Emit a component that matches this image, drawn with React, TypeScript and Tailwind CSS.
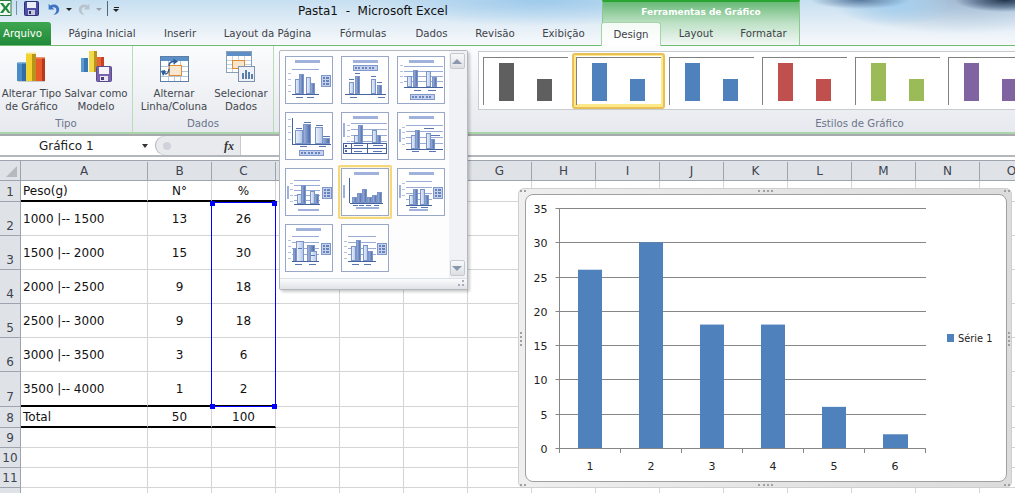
import React from "react";

const F = "[font-family:'DejaVu_Sans',sans-serif]";

const blue = "#4f81bd";

function Bar({ x, y, w, h, dark }: { x: number; y: number; w: number; h: number; dark?: boolean }) {
  return <rect x={x + 0.5} y={y + 0.5} width={w - 1} height={h - 1} fill={dark ? "url(#bd)" : "url(#bl)"} stroke="#7b95c9" strokeWidth="1" />;
}
function L({ x1, x2, y, c = "#9aacd6", w = 1 }: { x1: number; x2: number; y: number; c?: string; w?: number }) {
  return <line x1={x1} x2={x2} y1={y} y2={y} stroke={c} strokeWidth={w} />;
}
function Title({ x = 12, y = 4, w = 25 }: { x?: number; y?: number; w?: number }) {
  return <rect x={x} y={y} width={w} height="3" fill="#a0b1dc" />;
}
function HLegend({ x, y }: { x: number; y: number }) {
  return (
    <g>
      <rect x={x + 0.5} y={y + 0.5} width="24" height="5" fill="#c4d1ee" stroke="#7f97cb" />
      {[2, 5, 9, 12, 16, 19].map((d, i) => (
        <rect key={i} x={x + d} y={y + 2} width="2" height="2" fill="#6a83bb" />
      ))}
    </g>
  );
}
function VLegend({ x, y, h = 12 }: { x: number; y: number; h?: number }) {
  return (
    <g>
      <rect x={x + 0.5} y={y + 0.5} width="9" height={h - 1} fill="#c4d1ee" stroke="#7f97cb" />
      {[2, 5, 8].map((d) => (
        <g key={d}>
          <rect x={x + 2} y={y + d} width="2" height="2" fill="#6a83bb" />
          <rect x={x + 5} y={y + d} width="3" height="2" fill="#6a83bb" />
        </g>
      ))}
    </g>
  );
}
function Ticks({ x, ys }: { x: number; ys: number[] }) {
  return (
    <g>
      {ys.map((y) => (
        <L key={y} x1={x} x2={x + 3} y={y + 0.5} c="#b5c1de" />
      ))}
    </g>
  );
}
function Grid({ x1, x2, ys }: { x1: number; x2: number; ys: number[] }) {
  return (
    <g>
      {ys.map((y) => (
        <L key={y} x1={x1} x2={x2} y={y + 0.5} />
      ))}
    </g>
  );
}
function Base({ x1, x2, y }: { x1: number; x2: number; y: number }) {
  return <L x1={x1} x2={x2} y={y + 0.5} c="#45639f" />;
}
function Marks({ items }: { items: [number, number, number][] }) {
  return (
    <g>
      {items.map(([a, b, y], i) => (
        <L key={i} x1={a} x2={b} y={y + 0.5} c="#5a76b0" />
      ))}
    </g>
  );
}

const thumbs: React.ReactNode[] = [
  <g key="0">
    <Title x={10} /><Grid x1={7} x2={34} ys={[13]} /><Ticks x={3} ys={[17, 23, 29, 35]} />
    <Bar x={10} y={23} w={5} h={15} /><Bar x={14} y={18} w={5} h={20} dark /><Bar x={21} y={21} w={5} h={17} /><Bar x={25} y={27} w={5} h={11} dark />
    <Base x1={7} x2={34} y={38} /><Marks items={[[11, 18, 41], [22, 29, 41]]} /><VLegend x={36} y={19} />
  </g>,
  <g key="1">
    <Title /><HLegend x={12} y={9} />
    <Bar x={8} y={26} w={5} h={12} /><Bar x={14} y={20} w={5} h={18} dark /><Bar x={30} y={23} w={5} h={15} /><Bar x={36} y={29} w={5} h={9} dark />
    <Marks items={[[8, 13, 23], [14, 19, 17], [30, 35, 20], [36, 41, 26], [9, 16, 41], [37, 44, 41]]} /><Base x1={4} x2={45} y={38} />
  </g>,
  <g key="2">
    <Title /><Grid x1={7} x2={46} ys={[10, 15, 20, 25]} /><Ticks x={3} ys={[9, 15, 20, 26]} />
    <Bar x={10} y={20} w={5} h={11} /><Bar x={16} y={14} w={5} h={17} dark /><Bar x={29} y={15} w={5} h={16} /><Bar x={35} y={21} w={5} h={10} dark />
    <Base x1={7} x2={46} y={31} /><Marks items={[[17, 24, 34], [31, 39, 34]]} /><HLegend x={13} y={38} />
  </g>,
  <g key="3">
    <Ticks x={3} ys={[7, 14, 20, 27]} /><line x1="7.5" x2="7.5" y1="6" y2="32" stroke="#45639f" />
    <Bar x={10} y={18} w={8} h={14} /><Bar x={18} y={12} w={8} h={20} dark /><Bar x={30} y={15} w={8} h={17} /><Bar x={37} y={26} w={8} h={6} dark />
    <Marks items={[[11, 17, 16], [19, 26, 10], [31, 38, 13], [38, 45, 24]]} /><Base x1={7} x2={46} y={32} /><Marks items={[[15, 22, 34], [34, 41, 34]]} /><HLegend x={14} y={38} />
  </g>,
  <g key="4">
    <Title /><rect x="2" y="11" width="2" height="14" fill="#a0b1dc" /><Grid x1={10} x2={46} ys={[11, 17, 23, 29]} /><Ticks x={6} ys={[13, 18, 24, 29]} />
    <Bar x={13} y={23} w={5} h={8} /><Bar x={17} y={13} w={5} h={18} dark /><Bar x={31} y={18} w={5} h={13} /><Bar x={35} y={23} w={5} h={8} dark />
    <rect x="2.5" y="31.5" width="43" height="10" fill="#fff" stroke="#45639f" /><line x1="10.5" x2="10.5" y1="31" y2="42" stroke="#45639f" /><line x1="26.5" x2="26.5" y1="31" y2="42" stroke="#45639f" /><L x1={2} x2={46} y={36.5} c="#45639f" />
    <Marks items={[[13, 22, 33], [32, 42, 33], [13, 21, 39], [32, 41, 39]]} /><rect x="4" y="33" width="2" height="2" fill="#45639f" /><rect x="4" y="38" width="2" height="2" fill="#45639f" />
  </g>,
  <g key="5">
    <Title /><rect x="2" y="17" width="2" height="13" fill="#a0b1dc" /><Grid x1={9} x2={46} ys={[13, 19, 25, 31]} /><Ticks x={5} ys={[15, 20, 26, 32]} />
    <Bar x={14} y={23} w={5} h={14} /><Bar x={18} y={18} w={5} h={19} dark /><Bar x={29} y={21} w={5} h={16} /><Bar x={33} y={27} w={5} h={10} dark />
    <Marks items={[[27, 37, 16], [34, 43, 23], [15, 22, 39], [32, 39, 39]]} /><Base x1={9} x2={46} y={37} />
  </g>,
  <g key="6">
    <rect x="2" y="18" width="2" height="13" fill="#a0b1dc" /><Grid x1={9} x2={35} ys={[12, 17, 22, 27, 32]} /><Ticks x={5} ys={[15, 21, 27, 33]} />
    <Bar x={12} y={26} w={5} h={10} /><Bar x={16} y={17} w={5} h={19} dark /><Bar x={25} y={23} w={5} h={13} /><Bar x={29} y={26} w={5} h={10} dark />
    <Base x1={9} x2={35} y={36} /><rect x="13" y="41" width="21" height="2" fill="#a0b1dc" /><VLegend x={37} y={19} />
  </g>,
  <g key="7">
    <Title x={13} /><rect x="2" y="17" width="2" height="13" fill="#a0b1dc" /><line x1="8.5" x2="8.5" y1="10" y2="35" stroke="#45639f" />
    <Bar x={11} y={29} w={5} h={6} dark /><Bar x={16} y={25} w={5} h={10} dark /><Bar x={21} y={21} w={5} h={14} dark /><Bar x={26} y={29} w={5} h={6} dark /><Bar x={31} y={27} w={5} h={8} dark /><Bar x={36} y={24} w={5} h={11} dark />
    <Base x1={9} x2={42} y={35} /><Marks items={[[12, 17, 37], [18, 23, 37], [25, 30, 37], [33, 38, 37]]} /><rect x="15" y="39" width="23" height="2" fill="#a0b1dc" />
  </g>,
  <g key="8">
    <Title x={12} /><rect x="2" y="17" width="2" height="13" fill="#a0b1dc" /><Grid x1={9} x2={35} ys={[13, 19, 25, 31]} /><Ticks x={5} ys={[15, 21, 27]} />
    <Bar x={12} y={27} w={5} h={10} /><Bar x={16} y={21} w={5} h={16} dark /><Bar x={23} y={21} w={5} h={16} /><Bar x={27} y={27} w={5} h={10} dark />
    <Base x1={9} x2={35} y={37} /><Marks items={[[13, 20, 39], [24, 31, 39]]} /><rect x="12" y="41" width="19" height="2" fill="#a0b1dc" /><VLegend x={36} y={19} />
  </g>,
  <g key="9">
    <Title x={11} /><Grid x1={7} x2={34} ys={[12, 18, 24, 30]} /><Ticks x={3} ys={[16, 22, 28, 34]} />
    <Bar x={8} y={24} w={4} h={14} dark /><Bar x={11} y={17} w={8} h={21} /><Bar x={22} y={21} w={8} h={17} dark /><Bar x={25} y={27} w={7} h={11} />
    <Marks items={[[13, 17, 24], [26, 30, 31], [10, 17, 40], [24, 31, 40]]} /><Base x1={7} x2={34} y={37} /><VLegend x={36} y={19} />
  </g>,
  <g key="10">
    <Grid x1={7} x2={35} ys={[12, 18, 24, 30]} /><Ticks x={3} ys={[17, 22, 28, 34]} />
    <Bar x={10} y={22} w={5} h={15} /><Bar x={15} y={16} w={5} h={21} dark /><Bar x={22} y={21} w={5} h={16} /><Bar x={27} y={27} w={5} h={10} dark />
    <Base x1={7} x2={35} y={37} /><Marks items={[[11, 18, 40], [23, 30, 40]]} /><VLegend x={36} y={19} />
  </g>,
];

function Thumb({ i }: { i: number }) {
  const box = (
    <div className="h-12 w-12 border border-[#9aa8c8] bg-white">
      <svg width="46" height="46" viewBox="1 1 46 46" className="block">
        {thumbs[i]}
      </svg>
    </div>
  );
  if (i === 7)
    return <div className="-m-[3px] rounded-[2px] border-2 border-[#f6d878] bg-[#fff6d8] p-px">{box}</div>;
  return box;
}

function Popup() {
  return (
    <div className="absolute left-[279px] top-[50px] z-20 flex h-[240px] w-[189px] flex-col rounded-[2px] border border-[#b4b7bb] bg-[#fdfdfe] shadow-[2px_2px_3px_rgba(0,0,0,0.2)]">
      <div className="flex min-h-0 flex-1">
        <div className="grid flex-1 grid-cols-[48px_48px_48px] content-start gap-2 pl-[5px] pt-[5px]">
          {thumbs.map((_, i) => (
            <div key={i} className="h-12 w-12">
              <Thumb i={i} />
            </div>
          ))}
        </div>
        <div className="flex w-[18px] flex-col items-center justify-between bg-[#f1f2f5] py-0.5 pr-0.5">
          <div className="flex h-4 w-[15px] items-center justify-center rounded-[2px] border border-[#c5c8cd] bg-gradient-to-b from-[#f8f9fa] to-[#dcdfe4]">
            <div className="h-0 w-0 border-x-[5px] border-b-[5px] border-x-transparent border-b-[#8a98ad]" />
          </div>
          <div className="flex h-4 w-[15px] items-center justify-center rounded-[2px] border border-[#c5c8cd] bg-gradient-to-b from-[#f8f9fa] to-[#dcdfe4]">
            <div className="h-0 w-0 border-x-[5px] border-t-[5px] border-x-transparent border-t-[#8a98ad]" />
          </div>
        </div>
      </div>
      <div className="relative h-[11px] border-t border-[#dde0e4] bg-gradient-to-b from-[#fafbfc] to-[#dfe2e7]">
        <svg width="7" height="7" className="absolute bottom-0.5 right-0.5">
          <rect x="4" y="0" width="2" height="2" fill="#a9afb9" /><rect x="0" y="4" width="2" height="2" fill="#a9afb9" /><rect x="4" y="4" width="2" height="2" fill="#a9afb9" />
        </svg>
      </div>
    </div>
  );
}

function ExcelLogo() {
  return (
    <svg width="12" height="16" viewBox="0 0 12 16" className="-mt-[1px]">
      <rect x="-1" y="0.500" width="12" height="15" fill="#f4faf5" stroke="#2b7a3a" />
      <path d="M0 3h3l2.500 3.500L8 3h2.500L7 8l3.500 5H8L5.500 9.500 3 13H0l3.800-5z" fill="#1f8a3b" />
    </svg>
  );
}

function QuickAccess() {
  return (
    <div className="flex h-[22px] items-start pt-px">
      <ExcelLogo />
      <div className="ml-[4px] mr-[7px] h-[14px] w-px bg-[#7c8ea3]" />
      <svg width="15" height="15" viewBox="0 0 15 15">
        <rect x="0.500" y="0.500" width="14" height="14" rx="1" fill="#4d4fa6" stroke="#2e2f78" />
        <rect x="3" y="1" width="9" height="6" fill="#e8eef8" />
        <rect x="4" y="9" width="7" height="5" fill="#c5c9d6" />
        <rect x="5" y="10" width="2" height="3" fill="#2e2f78" />
      </svg>
      <svg width="13" height="13" viewBox="0 0 16 16" className="ml-[8px] mt-[2px]">
        <path d="M2 1v7h7L6.500 5.500C9 4.500 11.500 5.500 11.500 8.500c0 2.500-1 4-3.500 6 4.500 0 7-3 7-6.500 0-5.500-6.500-8-11-5z" fill="#3f74c4" />
      </svg>
      <div className="ml-[6px] mt-[7px] h-0 w-0 border-x-[3px] border-t-[3px] border-x-transparent border-t-[#222]" />
      <svg width="13" height="13" viewBox="0 0 16 16" className="ml-[6px] mt-[2px]">
        <path d="M14 1v7H7l2.500-2.500C7 4.500 4.500 5.500 4.500 8.500c0 2.500 1 4 3.500 6-4.500 0-7-3-7-6.500 0-5.500 6.500-8 11-5z" fill="#b9c3cd" />
      </svg>
      <div className="ml-[5px] mt-[7px] h-0 w-0 border-x-[3px] border-t-[3px] border-x-transparent border-t-[#9aa3ad]" />
      <div className="ml-[5px] mr-[5px] h-[15px] w-px bg-[#55667a]" />
      <div className="mt-[6px] flex flex-col items-center">
        <div className="h-px w-[5px] bg-[#222]" />
        <div className="mt-px h-0 w-0 border-x-[3px] border-t-[3px] border-x-transparent border-t-[#222]" />
      </div>
    </div>
  );
}

function ChartTypeIcon() {
  return (
    <svg width="29" height="30" viewBox="0 0 29 30">
      <path d="M0 11l2-1h7v19H0z" fill="#2f6da8" /><rect x="0" y="11" width="5" height="18" fill="#4c8cc6" /><rect x="1" y="10" width="8" height="1.500" fill="#8ab8de" />
      <path d="M18 6l2-1h8v24H18z" fill="#b8391a" /><rect x="18" y="6" width="7" height="23" fill="#e85a2b" /><rect x="19" y="5" width="9" height="1.500" fill="#f0936f" />
      <path d="M9 2l2-1h8v28H9z" fill="#b9941a" /><rect x="9" y="2" width="6" height="27" fill="#f2d230" /><rect x="10" y="0.500" width="9" height="1.500" fill="#f6e88a" />
      <rect x="1" y="29" width="27" height="1" fill="#8a8f96" opacity="0.4" />
    </svg>
  );
}
function TemplateIcon() {
  return (
    <svg width="31" height="31" viewBox="0 0 31 31">
      <rect x="0" y="7" width="7" height="14" fill="#3a78b5" /><rect x="0" y="7" width="3" height="14" fill="#5e9ad2" />
      <rect x="16" y="6" width="7" height="12" fill="#c9431f" /><rect x="16" y="6" width="4" height="12" fill="#e8643a" />
      <rect x="8" y="0" width="8" height="21" fill="#b9941a" /><rect x="8" y="0" width="5" height="21" fill="#f1d94c" />
      <rect x="15.500" y="15.500" width="15" height="15" rx="1" fill="#7a63ad" stroke="#5a4a90" />
      <rect x="18" y="16" width="10" height="7" fill="#f4f2fa" /><rect x="19" y="25" width="8" height="5" fill="#e8e4f2" /><rect x="20" y="26" width="3" height="3" fill="#4a3a86" />
    </svg>
  );
}
function SwitchIcon() {
  return (
    <svg width="29" height="26" viewBox="0 0 29 26">
      <rect x="0.500" y="0.500" width="28" height="25" fill="#fff" stroke="#5b7fa8" />
      <rect x="1" y="1" width="27" height="4" fill="#5b8fc6" />
      {[8, 14, 20].map((x) => <line key={x} x1={x + 0.5} x2={x + 0.5} y1="5" y2="25" stroke="#b8c6d6" />)}
      {[10, 15, 20].map((y) => <line key={y} x1="1" x2="28" y1={y + 0.5} y2={y + 0.5} stroke="#b8c6d6" />)}
      <rect x="9.500" y="9.500" width="12" height="10" fill="#f8e8d2" stroke="#e08a36" />
      <path d="M9 10c0-3 2-4.500 5-4.500" fill="none" stroke="#2b5c94" strokeWidth="1.500" />
      <path d="M13.500 2.500l4.500 3-4.500 3z" fill="#2b5c94" />
      <path d="M9 13c0 3-2 5-4 5" fill="none" stroke="#2b5c94" strokeWidth="1.500" />
      <path d="M4.500 14l-3.500 1 2 5 3-4z" fill="#2b5c94" />
    </svg>
  );
}
function SelectDataIcon() {
  return (
    <svg width="30" height="31" viewBox="0 0 30 31">
      <rect x="0.500" y="0.500" width="25" height="21" fill="#fff" stroke="#8aa0b8" />
      <rect x="1" y="1" width="24" height="4" fill="#5b8fc6" />
      {[6, 12, 18].map((x) => <line key={x} x1={x + 0.5} x2={x + 0.5} y1="5" y2="21" stroke="#c9d3de" />)}
      {[9, 13, 17].map((y) => <line key={y} x1="1" x2="25" y1={y + 0.5} y2={y + 0.5} stroke="#c9d3de" />)}
      <rect x="6.500" y="9.500" width="12" height="8" fill="#f8e6cc" stroke="#e08a36" />
      <rect x="12.500" y="15.500" width="16" height="15" fill="#eef2f8" stroke="#7d93ad" />
      <rect x="16" y="22" width="2" height="6" fill="#5b7fa8" /><rect x="19" y="19" width="2" height="9" fill="#5b7fa8" /><rect x="22" y="21" width="2" height="7" fill="#5b7fa8" /><rect x="25" y="23" width="2" height="5" fill="#5b7fa8" />
    </svg>
  );
}

function RibbonButton({ w, icon, a, b }: { w: string; icon: React.ReactNode; a: string; b: string }) {
  return (
    <div className={`flex flex-col items-center ${w}`}>
      <div className="flex h-[36px] items-end justify-center">{icon}</div>
      <div className="mt-[5px] whitespace-nowrap text-center text-[10.2px] leading-[13px] text-[#43474f]">
        <div>{a}</div>
        <div>{b}</div>
      </div>
    </div>
  );
}

function Style({ c, selected }: { c: string; selected?: boolean }) {
  return (
    <div className={`h-[56px] w-[93px] shrink-0 border-2 p-[2px] ${selected ? "rounded-[3px] border-[#e9bf58] bg-white shadow-[inset_0_0_0_1px_#ffe88a,inset_0_-1px_0_2px_#ffe88a]" : "border-transparent"}`}>
      <div className="flex h-[48px] w-[85px] items-end gap-[23px] border-l border-t border-[#808080] pb-[4px] pl-[15px]">
        <div className="h-[38px] w-[15px] shrink-0" style={{ background: c }} />
        <div className="h-[22px] w-[15px] shrink-0" style={{ background: c }} />
      </div>
    </div>
  );
}

const cols = ["D", "E", "F", "G", "H", "I", "J", "K", "L", "M", "N", "O"];
const rows: [string, string, string, string, number][] = [
  ["1", "Peso(g)", "N°", "%", 21],
  ["2", "1000 |-- 1500", "13", "26", 34],
  ["3", "1500 |-- 2000", "15", "30", 34],
  ["4", "2000 |-- 2500", "9", "18", 34],
  ["5", "2500 |-- 3000", "9", "18", 34],
  ["6", "3000 |-- 3500", "3", "6", 34],
  ["7", "3500 |-- 4000", "1", "2", 35],
  ["8", "Total", "50", "100", 21],
  ["9", "", "", "", 20],
  ["10", "", "", "", 20],
  ["11", "", "", "", 20],
  ["", "", "", "", 6],
];

function Sheet() {
  return (
    <div className="relative flex-1 overflow-hidden bg-white">
      <div className="flex h-5 border-b border-[#9da4ae] bg-[#dfe3e8] pt-px text-[12px] text-[#3d4450]">
        <div className="relative -mt-px w-[21px] shrink-0 border-r border-[#9da4ae]">
          <div className="absolute bottom-[3px] right-[3px] h-0 w-0 border-b-[11px] border-l-[11px] border-b-[#b5bac1] border-l-transparent" />
        </div>
        <div className="flex w-[127px] shrink-0 items-center justify-center border-r border-[#9da4ae]">A</div>
        <div className="flex w-[64px] shrink-0 items-center justify-center border-r border-[#9da4ae]">B</div>
        <div className="flex w-[64px] shrink-0 items-center justify-center border-r border-[#9da4ae]">C</div>
        {cols.map((c) => (
          <div key={c} className="flex w-[64px] shrink-0 items-center justify-center border-r border-[#9da4ae]">{c}</div>
        ))}
      </div>
      {rows.map(([n, a, b, c, h], i) => (
        <div key={i} className="flex text-[12px] text-[#111]" style={{ height: h }}>
          <div className="flex w-[21px] shrink-0 items-end justify-center border-b border-r border-[#9da4ae] bg-[#dfe3e8] text-[#3d4450]">
            <span className="leading-[17px]">{n}</span>
          </div>
          <div className={`flex w-[127px] shrink-0 items-center border-r border-[#d4d4d4] pl-0.5 ${i === 0 || i === 6 || i === 7 ? "border-b-2 border-b-black pt-px" : "border-b border-b-[#d4d4d4]"}`}>{a}</div>
          <div className={`flex w-[64px] shrink-0 items-center justify-center border-r border-[#d4d4d4] ${i === 0 || i === 6 || i === 7 ? "border-b-2 border-b-black pt-px" : "border-b border-b-[#d4d4d4]"}`}>{b}</div>
          <div className={`flex w-[64px] shrink-0 items-center justify-center border-r border-[#d4d4d4] ${i === 0 || i === 6 || i === 7 ? "border-b-2 border-b-black pt-px" : "border-b border-b-[#d4d4d4]"}`}>{c}</div>
          {cols.map((k) => (
            <div key={k} className="w-[64px] shrink-0 border-b border-r border-[#d4d4d4]" />
          ))}
        </div>
      ))}
      <div className="absolute left-[211px] top-[41px] h-[205px] w-[65px] border border-[#0000ff]" />
      {[[210, 40], [272, 40], [210, 243], [272, 243]].map(([l, t]) => (
        <div key={`${l}-${t}`} className="absolute h-[5px] w-[5px] bg-[#0000ff]" style={{ left: l, top: t }} />
      ))}
      <Chart />
    </div>
  );
}

function Chart() {
  const x0 = 33.5;
  const base = 253.5;
  const values = [26, 30, 18, 18, 6, 2];
  return (
    <div className="absolute left-[518px] top-[27px] h-[300px] w-[494px] rounded-[6px] border border-[#cfcfcf] bg-gradient-to-r from-[#efefef] to-[#dcdcdc] py-[5px] pl-[6px] pr-[4px]">
      <div className="absolute left-[239px] top-[1px] w-[15px] border-t-2 border-dotted border-[#a0a0a0]" />
      <div className="absolute bottom-[1px] left-[239px] w-[15px] border-t-2 border-dotted border-[#a0a0a0]" />
      <div className="absolute left-[1px] top-[143px] h-[14px] border-l-2 border-dotted border-[#a0a0a0]" />
      <div className="absolute right-[1px] top-[143px] h-[14px] border-l-2 border-dotted border-[#a0a0a0]" />
      <div className="absolute left-[1px] top-[1px] w-[6px] border-t-2 border-dotted border-[#a0a0a0]" />
      <div className="absolute right-[1px] top-[1px] w-[6px] border-t-2 border-dotted border-[#a0a0a0]" />
      <div className="absolute bottom-[1px] left-[1px] w-[6px] border-t-2 border-dotted border-[#a0a0a0]" />
      <div className="absolute bottom-[1px] right-[1px] w-[6px] border-t-2 border-dotted border-[#a0a0a0]" />
      <div className="h-[288px] w-[482px] overflow-hidden rounded-[8px] border border-[#a0a0a0] bg-white">
        <svg width="480" height="286" viewBox="0 0 480 286" className="block" fontFamily="'DejaVu Sans', sans-serif" fontSize="11" fill="#222">
          {[0, 5, 10, 15, 20, 25, 30, 35].map((v, i) => {
            const y = Math.round(base - 0.5 - i * 34.286) + 0.5;
            return (
              <g key={v}>
                <line x1={x0 - 4} x2={400} y1={y} y2={y} stroke="#868686" />
                <text x={x0 - 12} y={y + 4} textAnchor="end">{v}</text>
              </g>
            );
          })}
          <line x1={x0} x2={x0} y1={13} y2={258} stroke="#868686" />
          {[0, 1, 2, 3, 4, 5, 6].map((i) => (
            <line key={i} x1={x0 + i * 61} x2={x0 + i * 61} y1={253} y2={258} stroke="#868686" />
          ))}
          {values.map((v, i) => (
            <g key={i}>
              <rect x={52 + i * 61} y={253 - v * 6.857} width={i === 5 ? 25 : 24} height={v * 6.857} fill={blue} />
              <text x={64 + i * 61} y={275} textAnchor="middle">{i + 1}</text>
            </g>
          ))}
          <rect x={421} y={139} width={7} height={8} fill={blue} />
          <text x={432} y={147} fontSize="9.800">Série 1</text>
        </svg>
      </div>
    </div>
  );
}

export default function App() {
  return (
    <div className={`relative flex h-[493px] w-[1015px] flex-col overflow-hidden bg-white ${F}`}>
      <div className="relative z-10 h-[46px] shrink-0 border-b border-[#6fbb72] bg-[radial-gradient(ellipse_50px_12px_at_1005px_0px,#22344c_0%,rgba(60,85,115,0.6)_60%,transparent_100%),radial-gradient(ellipse_50px_9px_at_860px_0px,#5a7a9e_0%,transparent_100%),radial-gradient(ellipse_60px_22px_at_895px_4px,#a4d0f0_0%,transparent_100%),radial-gradient(ellipse_130px_34px_at_960px_0px,#a3bad2_0%,transparent_100%),radial-gradient(ellipse_170px_26px_at_540px_0px,#9ecaeb_0%,transparent_100%),linear-gradient(to_bottom,#c6dff1_0%,#deebf5_45%,#f7f9fb_100%)]">
        <div className="flex h-[22px] items-center">
          <div className="w-[298px] shrink-0 overflow-hidden"><QuickAccess /></div>
          <div className="text-[12px] text-[#111]">Pasta1&nbsp; -&nbsp; Microsoft Excel</div>
        </div>
        <div className="absolute left-[602px] top-0 h-[45px] w-[198px] border-x border-t-2 border-[#8bc98f] border-t-[#28a62f] bg-gradient-to-b from-[#67b978] via-[#bfe2c7] to-[#f2f7f5]">
          <div className="pt-[4px] text-center text-[9px] font-bold text-white">Ferramentas de Gráfico</div>
        </div>
        <div className="absolute left-0 top-[22px] flex h-[24px] items-stretch text-[10.2px] text-[#3f434a]">
          <div className="flex w-[51px] items-center rounded-tr-[3px] border-b border-[#6fbb72] bg-gradient-to-b from-[#3fa650] to-[#1e8a3a] pl-[3px] text-white">Arquivo</div>
          <div className="flex">
            {[
              ["Página Inicial", "w-[96px]"],
              ["Inserir", "w-[60px]"],
              ["Layout da Página", "w-[115px]"],
              ["Fórmulas", "w-[76px]"],
              ["Dados", "w-[61px]"],
              ["Revisão", "w-[66px]"],
              ["Exibição", "w-[71px]"],
            ].map(([t, w], i) => (
              <div key={t} className={`flex items-center justify-center ${w} ${i === 0 ? "ml-[3px]" : ""}`}>{t}</div>
            ))}
          </div>
          <div className="ml-[2px] flex w-[60px] items-center justify-center rounded-t-[3px] border-x border-t border-[#a5d4a8] bg-gradient-to-b from-[#f4faf5] to-white">Design</div>
          <div className="flex w-[70px] items-center justify-center">Layout</div>
          <div className="flex w-[65px] items-center justify-center">Formatar</div>
        </div>
      </div>

      <div className="flex h-[88px] shrink-0 border-b-2 border-[#a9d6aa] bg-gradient-to-b from-[#fbfcfd] to-[#e6e9ee]">
        <div className="flex w-[133px] shrink-0 flex-col border-r border-[#b8dcb8]">
          <div className="flex flex-1"><RibbonButton w="w-[63px]" icon={<ChartTypeIcon />} a="Alterar Tipo" b="de Gráfico" /><RibbonButton w="w-[66px]" icon={<TemplateIcon />} a="Salvar como" b="Modelo" /></div>
          <div className="h-[19px] pt-[4px] text-center text-[10.2px] leading-[14px] text-[#6c758a]">Tipo</div>
        </div>
        <div className="flex w-[141px] shrink-0 flex-col border-r border-[#b8dcb8]">
          <div className="flex flex-1 pl-[3px]"><RibbonButton w="w-[76px]" icon={<SwitchIcon />} a="Alternar" b="Linha/Coluna" /><RibbonButton w="w-[58px]" icon={<SelectDataIcon />} a="Selecionar" b="Dados" /></div>
          <div className="h-[19px] pt-[4px] text-center text-[10.2px] leading-[14px] text-[#6c758a]">Dados</div>
        </div>
        <div className="flex min-w-0 flex-1 flex-col pl-[204px] pt-[5px]">
          <div className="flex h-[59px] shrink-0 items-center overflow-hidden border-b border-l border-t border-[#c8cbd0] bg-white">
            <Style c="#5f5f5f" /><Style c={blue} selected /><Style c={blue} /><Style c="#c0504d" /><Style c="#9bbb59" /><Style c="#8064a2" />
          </div>
          <div className="flex-1 pl-[226px] pt-[7px] text-center text-[10.2px] leading-[14px] text-[#6c758a]">Estilos de Gráfico</div>
        </div>
      </div>

      <div className="flex h-[23px] shrink-0 items-stretch border-b-2 border-t-2 border-b-[#b4b7bb] border-t-[#a8aaad] bg-white text-[12px] text-[#222]">
        <div className="flex w-[155px] items-center justify-between pl-[39px] pr-[7px]">
          <span>Gráfico 1</span>
          <span className="h-0 w-0 border-x-[3px] border-t-[4px] border-x-transparent border-t-[#333]" />
        </div>
        <div className="flex w-[85px] items-center justify-between rounded-l-full bg-[#e8eaee] pl-2 pr-1.5 shadow-[inset_1px_0_0_#b4b7bb]">
          <div className="h-2 w-2 rounded-full bg-[#cfd3d9]" />
          <span className="font-['Liberation_Serif',serif] text-[12px] font-bold italic text-[#333]">fx</span>
        </div>
        <div className="flex-1 border-l border-[#c8cbd0]" />
      </div>
      <div className="h-[3px] shrink-0 bg-white" />

      <div className="relative flex-1">
        <div className="absolute inset-0 flex flex-col border-t border-[#9da4ae]"><Sheet /></div>
      </div>

      <Popup />

      <svg width="0" height="0" className="absolute">
        <defs>
          <linearGradient id="bl" x1="0" x2="1" y1="0" y2="0"><stop offset="0" stopColor="#eef3fb" /><stop offset="1" stopColor="#b3c6e8" /></linearGradient>
          <linearGradient id="bd" x1="0" x2="1" y1="0" y2="0"><stop offset="0" stopColor="#a4b8e0" /><stop offset="1" stopColor="#4a68a8" /></linearGradient>
        </defs>
      </svg>
    </div>
  );
}
